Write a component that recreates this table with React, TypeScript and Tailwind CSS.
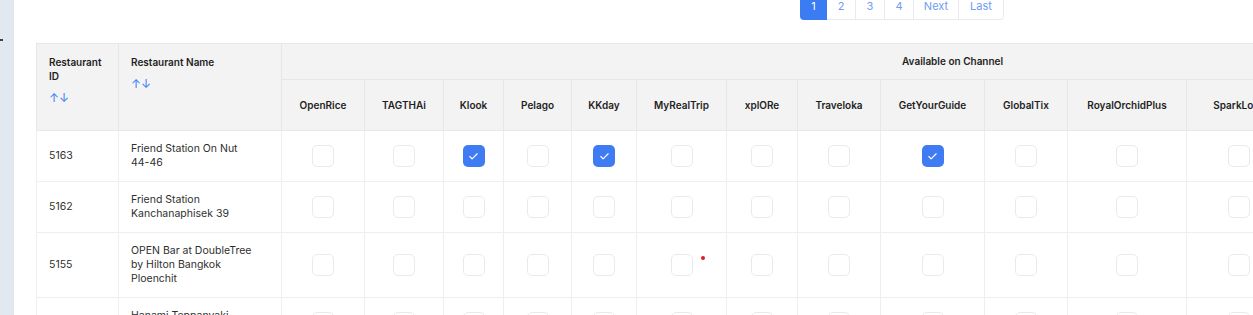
import { Check } from 'lucide-react'

type Row = {
  id: string
  name: string
  checked: string[]
}

const channels = [
  { name: 'OpenRice', w: 'w-[83px]' },
  { name: 'TAGTHAi', w: 'w-[79px]' },
  { name: 'Klook', w: 'w-[60px]' },
  { name: 'Pelago', w: 'w-[68px]' },
  { name: 'KKday', w: 'w-[65px]' },
  { name: 'MyRealTrip', w: 'w-[90px]' },
  { name: 'xplORe', w: 'w-[71px]' },
  { name: 'Traveloka', w: 'w-[83px]' },
  { name: 'GetYourGuide', w: 'w-[104px]' },
  { name: 'GlobalTix', w: 'w-[83px]' },
  { name: 'RoyalOrchidPlus', w: 'w-[119px]' },
  { name: 'SparkLove', w: 'w-[105px]' },
  { name: 'Eatigo', w: 'w-[110px]' },
  { name: 'Hungry Hub', w: 'w-[111px]' },
  { name: 'Chope', w: 'w-[111px]' },
]

const rows: Row[] = [
  { id: '5163', name: 'Friend Station On Nut 44-46', checked: ['Klook', 'KKday', 'GetYourGuide'] },
  { id: '5162', name: 'Friend Station Kanchanaphisek 39', checked: [] },
  { id: '5155', name: 'OPEN Bar at DoubleTree by Hilton Bangkok Ploenchit', checked: [] },
  { id: '5154', name: 'Hanami Teppanyaki Sukhumvit', checked: [] },
]

const pages = ['1', '2', '3', '4', 'Next', 'Last']

function Checkbox({ on }: { on: boolean }) {
  if (on) {
    return (
      <div className="mx-auto flex h-[22px] w-[22px] items-center justify-center rounded-[5px] bg-[#3f7cf4]">
        <Check className="h-[11px] w-[11px] text-white" strokeWidth={2.5} />
      </div>
    )
  }
  return <div className="mx-auto h-[22px] w-[22px] rounded-[5px] border-[1.5px] border-[#e8eaed] bg-white" />
}

export default function App() {
  return (
    <div className="relative flex h-[315px] w-[1253px] overflow-hidden bg-white font-['Inter','Liberation_Sans',sans-serif]">
      {/* sidebar edge */}
      <div className="relative h-full w-[14px] shrink-0 bg-[#e2e8f0]">
        <div className="absolute left-0 top-[39px] h-[2px] w-[3px] bg-[#374151]" />
      </div>

      <div className="min-w-0 flex-1 overflow-hidden pl-[22px]">
        {/* pagination */}
        <div className="-mt-[8px] flex pl-[764px]">
          {pages.map((p, i) => (
            <div
              key={p}
              className={
                i === 0
                  ? 'flex h-[28px] w-[27px] items-center justify-center rounded-l-[4px] bg-[#3b7cf3] text-[11px] text-white'
                  : 'flex h-[28px] items-center justify-center border border-l-0 border-[#e8eaed] px-[9px] text-[11px] text-[#6e9cf3] last:rounded-r-[4px] ' +
                    (p.length > 1 ? 'w-[45px]' : 'w-[29px]')
              }
            >
              {p}
            </div>
          ))}
        </div>

        {/* table */}
        <table className="mt-[23px] w-[1587px] table-fixed border-collapse text-left">
          <colgroup>
            <col className="w-[82px]" />
            <col className="w-[163px]" />
            {channels.map((c) => (
              <col key={c.name} className={c.w} />
            ))}
          </colgroup>
          <thead className="bg-[#f3f3f3] text-[10px] font-semibold text-[#1f1f1f]">
            <tr>
              <th rowSpan={2} className="border border-[#e7e7e7] px-[12px] pt-[11px] align-top font-semibold leading-[14px]">
                <div>Restaurant ID</div>
                <div className="mt-[8px] text-[12px] font-normal text-[#3b82f6]">↑↓</div>
              </th>
              <th rowSpan={2} className="border border-[#e7e7e7] px-[12px] pt-[11px] align-top font-semibold leading-[14px]">
                <div>Restaurant Name</div>
                <div className="mt-[8px] text-[12px] font-normal text-[#3b82f6]">↑↓</div>
              </th>
              <th colSpan={channels.length} className="h-[36px] border border-[#e7e7e7] text-center font-semibold">
                Available on Channel
              </th>
            </tr>
            <tr>
              {channels.map((c) => (
                <th key={c.name} className="h-[51px] border border-[#e7e7e7] text-center font-semibold">
                  {c.name}
                </th>
              ))}
            </tr>
          </thead>
          <tbody className="text-[10.5px] text-[#2f2f2f]">
            {rows.map((r) => (
              <tr key={r.id}>
                <td className="border border-[#eceef1] px-[12px] py-[11px] leading-[14px]">{r.id}</td>
                <td className="border border-[#eceef1] px-[12px] py-[11px] leading-[14px]">
                  <div className="max-w-[124px]">{r.name}</div>
                </td>
                {channels.map((c) => (
                  <td key={c.name} className="border border-[#eceef1] align-middle">
                    <Checkbox on={r.checked.includes(c.name)} />
                  </td>
                ))}
              </tr>
            ))}
          </tbody>
        </table>
      </div>

      {/* cursor dot */}
      <div className="absolute left-[701px] top-[256px] h-[4px] w-[4px] rounded-full bg-[#e11d1d]" />
    </div>
  )
}
